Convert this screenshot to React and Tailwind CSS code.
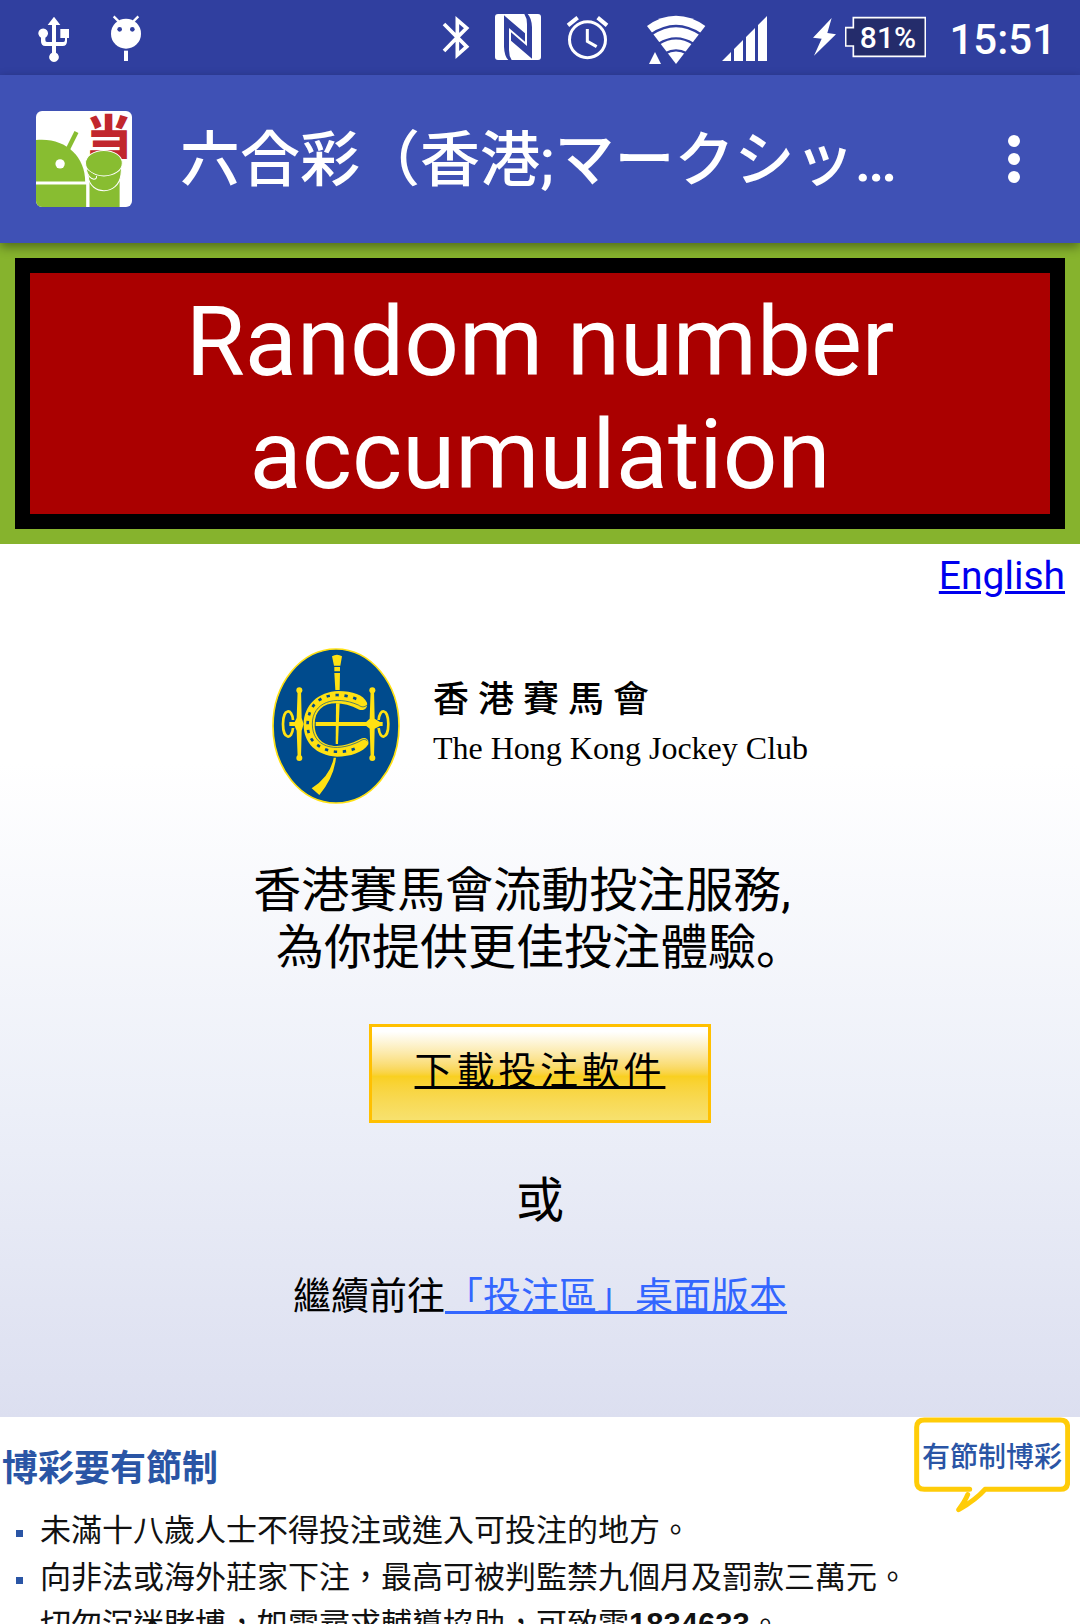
function UsbIcon() {
  return (
    <svg viewBox="114 0 96 225" className="h-[75px] w-8" fill="#fff" aria-label="USB connected">
      <path d="M162 50 L181 75 H168 V126 H190 Q195 126 195 120 V114 H181 V87 H207 V114 H201 V124 Q201 138 188 138 H168 V158 A14.500 14.500 0 1 1 156 158 V138 H136 Q123 138 123 124 V113 A14.500 14.500 0 1 1 136 113 V120 Q136 126 141 126 H156 V75 H143 Z" />
    </svg>
  );
}

function DebugIcon() {
  return (
    <svg viewBox="330 0 96 225" className="h-[75px] w-8" aria-label="USB debugging">
      <circle cx="378" cy="101" r="45" fill="#fff" />
      <path d="M341 49 L356 64 M415 49 L400 64" stroke="#fff" strokeWidth="7" />
      <path d="M378 152 V183" stroke="#fff" strokeWidth="12" />
      <circle cx="359" cy="88" r="7" fill="#303f9f" />
      <circle cx="397" cy="88" r="7" fill="#303f9f" />
    </svg>
  );
}

function BluetoothIcon() {
  return (
    <svg viewBox="66 0 84 225" className="h-[75px] w-7" fill="none" stroke="#fff" strokeWidth="11" aria-label="Bluetooth">
      <path d="M72 72 L112 112 L72 153 M112 112 L140 84 L112 60 V165 L140 140 Z" />
    </svg>
  );
}

function NfcIcon() {
  return (
    <svg viewBox="225 0 144 225" className="h-[75px] w-12" aria-label="NFC">
      <rect x="228" y="42" width="138" height="138" rx="9" fill="#fff" />
      <g fill="#303f9f">
        <path d="M255 46 L318 100 V125 L270 84 V150 Q270 168 278 180 H268 Q256 168 255 140 Z" />
        <path d="M339 176 L276 122 V97 L324 138 V72 Q324 54 316 42 H326 Q338 54 339 82 Z" />
      </g>
    </svg>
  );
}

function AlarmIcon() {
  return (
    <svg viewBox="438 0 129 225" className="h-[75px] w-[43px]" fill="none" stroke="#fff" aria-label="Alarm set">
      <circle cx="502.500" cy="119" r="54" strokeWidth="9" />
      <path d="M502 87 V124 L530 140" strokeWidth="9" />
      <path d="M444 76 L473 53 M561 76 L533 53" strokeWidth="12" />
    </svg>
  );
}

function WifiIcon() {
  return (
    <svg viewBox="678 0 180 225" className="h-[75px] w-[60px]" aria-label="Wi-Fi">
      <path d="M681 78 Q722 47 768 47 Q814 47 856 78 L768 192 Z" fill="#fff" />
      <g fill="none" stroke="#303f9f" strokeWidth="7">
        <path d="M694 103 Q768 53 842 103" />
        <path d="M716 131 Q768 99 820 131" />
        <path d="M736 160 Q768 142 800 160" />
      </g>
      <path d="M705 156 L723 192 H687 Z" fill="#fff" />
    </svg>
  );
}

function SignalIcon() {
  return (
    <svg viewBox="66 0 138 225" className="h-[75px] w-[46px]" fill="#fff" aria-label="Mobile signal">
      <path d="M66 183 L93 156 V183 Z M102 147 L129 120 V183 H102 Z M138 111 L165 84 V183 H138 Z M174 75 L201 48 V183 H174 Z" />
    </svg>
  );
}

function BoltIcon() {
  return (
    <svg viewBox="339 0 75 225" className="h-[75px] w-[25px]" fill="#fff" aria-label="Charging">
      <path d="M398 54 L342 113 L368 116 L345 167 L411 103 L385 99 Z" />
    </svg>
  );
}

function Battery() {
  return (
    <div className="relative h-[75px] w-[81px]">
      <svg viewBox="435 0 243 225" className="h-full w-full" aria-hidden="true">
        <path d="M460 53 H676 V169 H460 V138 H437 V83 H460 Z" fill="#242c6b" stroke="#fff" strokeWidth="5" />
      </svg>
      <span className="absolute inset-y-0 right-0 left-1 flex items-center justify-center text-[30px] leading-none font-medium">
        81%
      </span>
    </div>
  );
}

function AppIcon() {
  return (
    <svg viewBox="110 334 287 287" className="size-24 shrink-0 overflow-visible" aria-label="App logo">
      <defs>
        <clipPath id="tile">
          <rect x="110" y="334" width="287" height="287" rx="18" />
        </clipPath>
      </defs>
      <g clipPath="url(#tile)">
        <rect x="110" y="334" width="287" height="287" fill="#fff" />
        <path d="M110 421 C195 412 257 468 257 545 H110 Z" fill="#88bd31" />
        <path d="M206 447 L231 397" stroke="#88bd31" strokeWidth="13" />
        <circle cx="182" cy="492" r="14" fill="#fff" />
        <path d="M110 554 H260 V621 H110 Z M270 545 H360 V621 H270 Z" fill="#88bd31" />
      </g>
      <text x="258" y="462" fontSize="138" fontWeight="900" fill="#c1272d" fontFamily="'Noto Sans CJK JP', sans-serif">
        当
      </text>
      <path d="M258 490 L266 530 C272 587 356 587 364 525 L367 490 Z" fill="#88bd31" stroke="#fff" strokeWidth="3" />
      <ellipse cx="313" cy="490" rx="55" ry="38" fill="#88bd31" stroke="#fff" strokeWidth="3" />
      <path d="M260 508 Q266 535 283 538 Q292 538 291 528" fill="#88bd31" stroke="#fff" strokeWidth="3" />
    </svg>
  );
}

function ClubEmblem() {
  return (
    <svg viewBox="64 52 384 468" className="h-[156px] w-32 shrink-0" aria-label="The Hong Kong Jockey Club emblem">
      <ellipse cx="256" cy="286" rx="189" ry="231" fill="#004b8d" stroke="#ffe112" strokeWidth="5" />
      <g fill="#ffe112">
        <path d="M244 77 Q259 68 274 77 L269 105 H250 Z M251 109 H268 V122 H251 Z M251 127 H268 L267 178 H254 Z" />
        <path d="M256 218 H267 L262 340 H255 Z" />
        <path d="M249 381 H256 Q250 440 206 493 L183 473 Q240 436 249 381 Z" />
        <path d="M195 274 H360 V286 H195 Z" />
        <path d="M141 176 H151 L153 262 L159 280 L153 300 L151 382 H141 L138 300 L132 286 H116 V274 H132 L138 262 Z" />
        <path d="M360 176 H370 L372 264 L388 274 H396 V286 H388 L372 294 L370 382 H360 L357 294 L344 284 V276 L357 264 Z" />
        <circle cx="146" cy="179" r="9" />
        <circle cx="146" cy="382" r="9" />
        <circle cx="365" cy="179" r="9" />
        <circle cx="365" cy="382" r="9" />
      </g>
      <g fill="none" stroke="#ffe112" strokeWidth="8">
        <path d="M127 268 C124 232 97 232 97 280 C97 328 124 328 127 292" />
        <path d="M384 268 C387 232 413 232 413 280 C413 328 387 328 384 292" />
      </g>
      <path
        d="M349 216 C352 231 341 242 326 237 C252 200 192 218 192 282 C192 342 250 366 328 326 C343 317 356 325 353 341 C337 366 299 378 259 378 C195 373 159 336 159 282 C159 223 203 183 263 181 C306 181 339 193 349 216 Z"
        fill="#ffe112"
      />
      <path
        d="M349 223 C341 231 333 230 323 223 C252 192 185 215 185 280 C185 349 252 369 327 332 C338 324 346 325 351 332"
        fill="none"
        stroke="#004b8d"
        strokeWidth="2"
      />
      <path
        d="M317 205 C258 182 204 192 181 237 C163 277 168 323 202 344 C235 368 281 369 320 351"
        fill="none"
        stroke="#004b8d"
        strokeWidth="8"
        strokeDasharray="10 17"
      />
    </svg>
  );
}

function StatusBar() {
  return (
    <header className="flex h-[75px] items-center justify-between bg-[#303f9f] pr-6 pl-[38px] text-white">
      <div className="flex gap-10">
        <UsbIcon />
        <DebugIcon />
      </div>
      <div className="flex items-center">
        <div className="mr-[37px] flex items-center gap-6">
          <BluetoothIcon />
          <NfcIcon />
          <AlarmIcon />
        </div>
        <div className="mr-11 flex items-center gap-4">
          <WifiIcon />
          <SignalIcon />
        </div>
        <div className="mr-[23px] flex items-center gap-2">
          <BoltIcon />
          <Battery />
        </div>
        <time className="pt-1 text-[42px] leading-none font-medium">15:51</time>
      </div>
    </header>
  );
}

function AppBar() {
  return (
    <div className="relative flex h-[168px] items-center bg-[#3f51b5] pr-[48px] pl-9 text-white shadow-[0_4px_10px_rgba(0,0,0,0.4)]">
      <AppIcon />
      <h1 className="ml-12 min-w-0 flex-1 truncate pt-1 pr-16 text-[60px] leading-[88px] font-medium" lang="ja">
        六合彩（香港;マークシッ…
      </h1>
      <button type="button" aria-label="More options" className="flex w-9 flex-col items-center gap-[6px]">
        <span className="size-3 rounded-full bg-white" />
        <span className="size-3 rounded-full bg-white" />
        <span className="size-3 rounded-full bg-white" />
      </button>
    </div>
  );
}

function SpeechBubble() {
  return (
    <div className="relative h-24 w-[156px]">
      <svg viewBox="103 51 468 288" className="h-full w-full" fill="none" stroke="#ffcc08" strokeWidth="15" strokeLinejoin="round" strokeLinecap="round" aria-hidden="true">
        <path d="M270 268 H134 Q111 268 111 246 V82 Q111 60 134 60 H542 Q564 60 564 82 V246 Q564 268 542 268 H316 Q290 298 237 329 Q256 304 264 284" />
      </svg>
      <a href="#responsible" className="absolute inset-x-0 top-0 flex h-[82px] items-center justify-center text-[28px] font-medium text-[#2a55a5]">
        有節制博彩
      </a>
    </div>
  );
}

const rules = [
  { text: "未滿十八歲人士不得投注或進入可投注的地方。" },
  { text: "向非法或海外莊家下注，最高可被判監禁九個月及罰款三萬元。" },
  { text: "切勿沉迷賭博，如需尋求輔導協助，可致電", phone: "1834633", end: "。" },
];

export default function App() {
  return (
    <div className="h-screen overflow-hidden bg-white font-['Roboto','Noto_Sans_CJK_JP',sans-serif] text-black">
      <StatusBar />
      <AppBar />
      <section className="bg-[#86b32d] p-[15px]">
        <button type="button" className="block w-full border-[15px] border-black bg-[#aa0000] px-4 pt-[13px] pb-[2px] text-center text-[96px] leading-[113px] text-white">
          Random number
          <br />
          accumulation
        </button>
      </section>

      <main lang="zh-HK">
        <section className="flex flex-col items-center bg-linear-to-b from-white from-25% via-[#eceff8] via-65% to-[#dcdff0] pb-[98px]">
          <a href="#english" className="mt-2 mr-[15px] self-end text-[39px] leading-12 text-[#0000ee] underline">
            English
          </a>
          <div className="mt-12 flex items-center gap-[33px]">
            <ClubEmblem />
            <div className="pb-1 font-['Liberation_Serif','Noto_Sans_CJK_TC',serif]">
              <p className="text-[36px] leading-12 font-medium">香 港 賽 馬 會</p>
              <p className="text-[32px] leading-12">The Hong Kong Jockey Club</p>
            </div>
          </div>
          <h2 className="mt-[58px] text-center text-[48px] leading-[57px]" lang="ja">
            <span className="pr-[36px]">香港賽馬會流動投注服務,</span>
            <br />
            為你提供更佳投注體驗。
          </h2>
          <a
            href="#download"
            className="mt-12 flex h-[99px] items-center border-[3px] border-[#ffc000] bg-linear-to-b from-white from-5% via-[#f9d020] via-53% to-[#f7e16e] px-[43px] pb-1 text-[38px] tracking-widest underline"
          >
            下載投注軟件
          </a>
          <p className="mt-[46px] text-[48px] leading-16">或</p>
          <p className="mt-[39px] text-[38px] leading-12">
            繼續前往
            <a href="#desktop" className="text-[#3366ff] underline">
              「投注區」桌面版本
            </a>
          </p>
        </section>

        <section className="-mt-px bg-white font-['Liberation_Sans','Noto_Sans_CJK_TC',sans-serif]">
          <div className="flex items-start justify-between pr-[10px]">
            <h3 className="mt-7 pl-[2px] text-[36px] leading-12 font-bold text-[#2a55a5]">博彩要有節制</h3>
            <SpeechBubble />
          </div>
          <ul className="-mt-[6px] pl-4 text-[31px] leading-[47px] whitespace-nowrap text-[#111]">
            {rules.map((rule) => (
              <li key={rule.text} className="flex items-center gap-[17px]">
                <span className="mt-[6px] size-[7px] bg-[#2a55a5]" />
                <span>
                  {rule.text}
                  {rule.phone && <b>{rule.phone}</b>}
                  {rule.end}
                </span>
              </li>
            ))}
          </ul>
        </section>
      </main>
    </div>
  );
}
